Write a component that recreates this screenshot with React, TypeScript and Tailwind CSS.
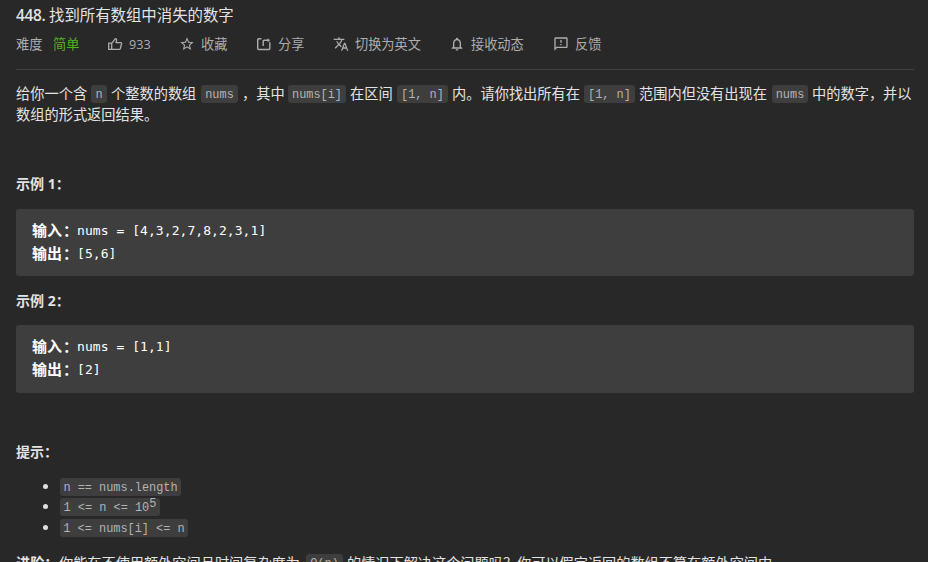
import type { ReactNode } from 'react';
import { MdOutlineFeedback, MdNotificationsNone, MdStarBorder, MdTranslate } from 'react-icons/md';

const Chip = ({ w, children }: { w: string; children: ReactNode }) => (
  <code
    className={`${w} h-[18px] shrink-0 rounded-[3px] bg-[#3e3e3e] text-center font-['Liberation_Mono',monospace] text-[11.9px] leading-[21px] whitespace-pre text-[#b3b3b3]`}
  >
    {children}
  </code>
);

const Words = ({ w, children }: { w: string; children: ReactNode }) => (
  <span className={`${w} shrink-0 whitespace-nowrap`}>{children}</span>
);

const Action = ({ w, icon, gap, children }: { w: string; icon: ReactNode; gap: string; children: ReactNode }) => (
  <button className={`${w} ${gap} flex shrink-0 items-center whitespace-nowrap`}>
    {icon}
    <span>{children}</span>
  </button>
);

const LikeIcon = () => (
  <svg width="16" height="16" viewBox="0 0 16 16" fill="none" stroke="currentColor" strokeWidth="1.3" strokeLinejoin="round">
    <path d="M1.7 7.1h3v6.3h-3zM4.7 7.3l3.7-4.7c1 .1 1.4.8 1.2 1.7L9 6.6h4.9c.5 0 .8.4.7.9l-1.2 5c-.1.6-.5.9-1 .9H4.7" />
  </svg>
);

const ShareIcon = () => (
  <svg width="16" height="16" viewBox="0 0 16 16" fill="none" stroke="currentColor" strokeWidth="1.4">
    <path d="M5.4 2.7H2.7c-.6 0-1 .4-1 1v8.8c0 .6.4 1 1 1h10.1c.6 0 1-.4 1-1V6.2" />
    <path d="M7.2 10V5.2c0-.6.4-1 1-1h4.4" />
    <path d="m11.6 2.2 2.5 2-2.5 2z" fill="currentColor" stroke="none" />
  </svg>
);

const Line = ({ label, value }: { label: string; value: string }) => (
  <div className="flex h-[23px]">
    <b className="-mt-px flex w-[45px] shrink-0 font-['Noto_Sans_CJK_SC',sans-serif] text-[15px]">
      <span>{label}</span>
      <span className="pl-[1px]">：</span>
    </b>
    <span className="tracking-[0.06px]">{value}</span>
  </div>
);

const Example = ({ input, output, height }: { input: string; output: string; height: string }) => (
  <pre
    className={`${height} rounded-[3px] bg-[#3e3e3e] pt-[10px] pl-[16px] font-['DejaVu_Sans_Mono','Noto_Sans_CJK_SC',monospace] text-[13px] leading-[23px] text-white`}
  >
    <Line label="输入" value={input} />
    <Line label="输出" value={output} />
  </pre>
);

const Heading = ({ children }: { children: ReactNode }) => (
  <h3 className="h-[20px] text-[14px] leading-[20px] font-bold">{children}</h3>
);

const Bullet = ({ h, children }: { h: string; children: ReactNode }) => (
  <li className={`${h} flex items-start`}>
    <span className="mt-[6px] mr-[12px] ml-[27px] size-[5px] rounded-full bg-[#e0e0e0]" />
    {children}
  </li>
);

export default function App() {
  return (
    <main className="flex h-[562px] w-[928px] flex-col overflow-hidden bg-[#282828] pr-[14px] pl-[16px] font-['Open_Sans','Noto_Sans_CJK_SC',sans-serif] text-[14px] text-[#e3e3e3]">
      <h1 className="mt-[4px] flex h-[23px] shrink-0 text-[15.4px] leading-[23px]">
        <span className="w-[33px] font-semibold tracking-[-0.3px]">448.</span>
        <span>找到所有数组中消失的数字</span>
      </h1>

      <div className="mt-[7px] flex h-[20px] shrink-0 items-center text-[13.2px] leading-[20px] text-[#adadad]">
        <span className="w-[37px]">难度</span>
        <span className="w-[54px] text-[#4fb420]">简单</span>
        <Action w="w-[72px]" gap="gap-[6px]" icon={<LikeIcon />}>
          <span className="text-[12.6px]">933</span>
        </Action>
        <Action w="w-[77px]" gap="gap-[6px]" icon={<MdStarBorder size={16} />}>收藏</Action>
        <Action w="w-[77px]" gap="gap-[6px]" icon={<ShareIcon />}>分享</Action>
        <Action w="w-[116px]" gap="gap-[6px]" icon={<MdTranslate size={16} />}>切换为英文</Action>
        <Action w="w-[104px]" gap="gap-[6px]" icon={<MdNotificationsNone size={16} />}>接收动态</Action>
        <Action w="w-[60px]" gap="gap-[6px]" icon={<MdOutlineFeedback size={16} />}>反馈</Action>
      </div>

      <div className="mt-[15px] h-px shrink-0 bg-[#424242]" />

      <section className="mt-[13px] shrink-0 text-[14.22px] leading-[21px]">
        <p className="flex h-[21px] items-center">
          <Words w="w-[75px]">给你一个含</Words>
          <Chip w="w-[16px]">n</Chip>
          <Words w="w-[94px] pl-[4px]">个整数的数组</Words>
          <Chip w="w-[37px]">nums</Chip>
          <Words w="w-[50px] pl-[4px]">，其中</Words>
          <Chip w="w-[58px]">nums[i]</Chip>
          <Words w="w-[51px] pl-[4px]">在区间</Words>
          <Chip w="w-[51px]">[1, n]</Chip>
          <Words w="w-[136px] pl-[4px]">内。请你找出所有在</Words>
          <Chip w="w-[51px]">[1, n]</Chip>
          <Words w="w-[137px] pl-[4px]">范围内但没有出现在</Words>
          <Chip w="w-[36px]">nums</Chip>
          <Words w="w-[106px] pl-[4px]">中的数字，并以</Words>
        </p>
        <p className="h-[21px]">数组的形式返回结果。</p>
      </section>

      <section className="mt-[49px] shrink-0">
        <Heading>示例 1：</Heading>
        <div className="mt-[15px]">
          <Example height="h-[67px]" input="nums = [4,3,2,7,8,2,3,1]" output="[5,6]" />
        </div>
      </section>
      <section className="mt-[15px] shrink-0">
        <Heading>示例 2：</Heading>
        <div className="mt-[14px]">
          <Example height="h-[68px]" input="nums = [1,1]" output="[2]" />
        </div>
      </section>

      <section className="mt-[49px] shrink-0">
        <Heading>提示：</Heading>
        <ul className="mt-[16px]">
          <Bullet h="h-[20px]"><Chip w="w-[121px]">n == nums.length</Chip></Bullet>
          <Bullet h="h-[21px]">
            <Chip w="w-[100px]">{'1 <= n <= 10'}<sup className="-top-[4px] text-[12px]">5</sup></Chip>
          </Bullet>
          <Bullet h="h-[18px]"><Chip w="w-[128px]">{'1 <= nums[i] <= n'}</Chip></Bullet>
        </ul>
      </section>

      <p className="mt-[15px] flex h-[22px] shrink-0 items-center text-[14.18px] leading-[22px]">
        <b className="w-[43px] shrink-0">进阶：</b>
        <Words w="w-[247px]">你能在不使用额外空间且时间复杂度为</Words>
        <Chip w="w-[37px]">O(n)</Chip>
        <Words w="pl-[4px]">的情况下解决这个问题吗？你可以假定返回的数组不算在额外空间内。</Words>
      </p>
    </main>
  );
}
